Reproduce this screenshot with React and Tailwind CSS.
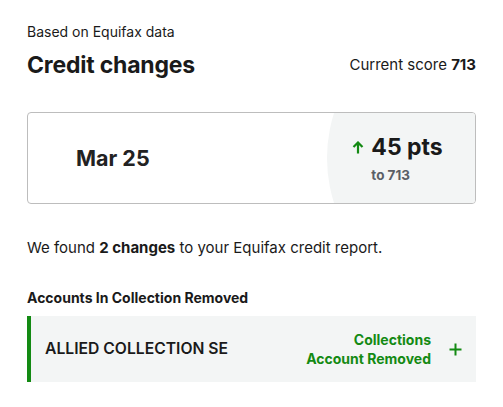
import React from 'react';

const App = () => {
  return (
    <div className="min-h-[407px] w-[503px] bg-white px-[27px] pt-[22px] text-[#1a1a1a] font-['Inter','Noto_Sans',sans-serif]">
      <p className="text-[14px] leading-[19px]">Based on Equifax data</p>

      <div className="mt-[9px] flex items-center justify-between">
        <h1 className="text-[23px] font-bold leading-[30px] tracking-[-0.2px]">Credit changes</h1>
        <p className="text-[15px] leading-[20px]">
          Current score <span className="font-bold">713</span>
        </p>
      </div>

      <div className="mt-[32px] flex h-[92px] overflow-hidden rounded-[4px] border border-[#bdbdbd]">
        <div className="flex flex-1 items-center pl-[48px]">
          <span className="text-[21.5px] font-bold text-[#222]">Mar 25</span>
        </div>
        <div className="relative w-[148px]">
          <div className="absolute left-0 top-[calc(50%-148px)] h-[296px] w-[296px] rounded-full bg-[#f3f5f5]" />
          <div className="relative flex h-full items-center justify-center pr-[7px]">
            <div className="flex items-start gap-[7px]">
              <svg className="mt-[8px]" width="12" height="13" viewBox="0 0 12 13" fill="none">
                <path d="M6 12.5V2M1.5 6L6 1.5L10.5 6" stroke="#138a13" strokeWidth="2.2" />
              </svg>
              <div className="flex flex-col items-start">
                <span className="text-[23px] font-bold leading-[28px]">45 pts</span>
                <span className="mt-[6px] text-[13.5px] font-bold leading-[16px] text-[#5a5f66]">to 713</span>
              </div>
            </div>
          </div>
        </div>
      </div>

      <p className="mt-[33px] text-[15px] leading-[22px]">
        We found <span className="font-bold">2 changes</span> to your Equifax credit report.
      </p>

      <h2 className="mt-[29px] text-[14px] font-bold leading-[19px]">Accounts In Collection Removed</h2>

      <div className="mt-[9px] flex h-[66px] items-center border-l-[4px] border-[#138a13] bg-[#f3f5f5] pl-[14px] pr-[14px]">
        <span className="flex-1 text-[15.7px] font-semibold">ALLIED COLLECTION SE</span>
        <div className="text-right text-[14px] font-bold leading-[19px] text-[#138a13]">
          <div>Collections</div>
          <div>Account Removed</div>
        </div>
        <svg className="ml-[18px]" width="13" height="13" viewBox="0 0 13 13" fill="none">
          <path d="M6.5 0.5V12.5M0.5 6.5H12.5" stroke="#138a13" strokeWidth="2" />
        </svg>
      </div>
    </div>
  );
};

export default App;
